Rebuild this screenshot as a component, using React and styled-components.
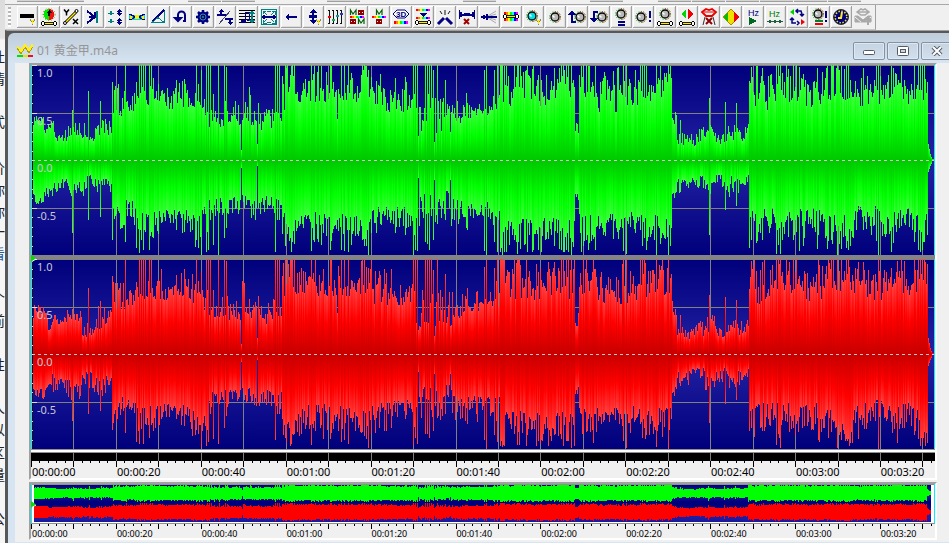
import React from 'react';
import styled, { createGlobalStyle } from 'styled-components';

const GlobalStyle = createGlobalStyle`
  * {
    box-sizing: border-box;
  }
  body {
    margin: 0;
    overflow: hidden;
    background: #f0f0f0;
    font-family: 'Noto Sans', 'Noto Sans CJK SC', sans-serif;
  }
  svg {
    display: block;
  }
`;

const Screen = styled.div`
  display: flex;
  min-height: 100vh;
  overflow: hidden;
`;

const PageStrip = styled.aside`
  flex: none;
  display: flex;
  flex-direction: column;
  width: 5px;
  padding-top: 46px;
  overflow: hidden;
  background: linear-gradient(#dcdcdc 0, #e2e2e2 38px, #f6f6f6 40px);
`;

const StripLine = styled.div`
  height: ${({ $h }) => $h}px;
  margin-left: -9px;
  width: 16px;
  font-size: 14px;
  line-height: 22px;
  color: ${({ $link }) => ($link ? '#2a5d9c' : '#222')};
`;

const Main = styled.main`
  flex: 1;
  display: flex;
  flex-direction: column;
  min-width: 0;
  overflow: hidden;
`;

const UpperBar = styled.div`
  display: flex;
  height: 5px;
  padding-left: 12px;
  border-bottom: 1px solid #a8a8a8;
  background: #f0f0f0;
`;

const UpperSlot = styled.div`
  flex: none;
  width: ${({ $w }) => $w}px;
  height: 2px;
  margin-right: 1px;
  background: ${({ $on }) => ($on ? '#d4d4d4' : 'transparent')};
  border-bottom: 1px solid ${({ $on }) => ($on ? '#a0a0a0' : 'transparent')};
`;

const Toolbar = styled.div`
  display: flex;
  align-self: flex-start;
  align-items: center;
  height: 25px;
  padding-left: 3px;
  background: #f0f0f0;
  border-right: 1px solid #a0a0a0;
  border-bottom: 1px solid #c8c8c8;
`;

const Grip = styled.div`
  width: 3px;
  height: 20px;
  margin-right: 6px;
  background: repeating-linear-gradient(#b8b8b8 0 2px, #fff 2px 4px);
`;

const ToolButton = styled.button`
  flex: none;
  width: 21px;
  height: 22px;
  margin-right: 1px;
  padding: 0;
  border: 0;
  background: #f0f0f0;
  box-shadow: ${({ disabled }) => (disabled
    ? 'none'
    : 'inset -1px -1px #a0a0a0, inset 1px 1px #fff, inset -2px -2px #dcdcdc')};
`;

const Desktop = styled.section`
  flex: 1;
  padding: 2px 0 0 1px;
  border-left: 2px solid #585858;
  border-top: 1px solid #a0a0a0;
  background: #585858;
`;

const Window = styled.article`
  display: flex;
  flex-direction: column;
  min-height: 100%;
  margin-right: -12px;
  padding: 0 7px 7px;
  border-radius: 6px 0 0 0;
  background: linear-gradient(#bfcddb 0, #d7e4f2 30px);
`;

const TitleBar = styled.header`
  display: flex;
  align-items: center;
  height: 30px;
  padding: 5px 1px 0 2px;
`;

const Title = styled.h1`
  flex: 1;
  margin: 0 0 0 4px;
  font-size: 12px;
  font-weight: 400;
  line-height: 16px;
  color: #969696;
`;

const WindowButton = styled.button`
  display: flex;
  align-items: center;
  justify-content: center;
  width: 32px;
  height: 18px;
  margin-left: 2px;
  padding: 0;
  border: 1px solid #8592a3;
  border-radius: 2px;
  background: linear-gradient(#c6d4e2, #d2dfec);
  box-shadow: inset 0 0 0 1px #dde8f3;
`;

const Client = styled.div`
  padding: 0 17px 0 14px;
  background: #f0f0f0;
`;

const Panel = styled.section`
  position: relative;
  margin-bottom: 2px;
  border: 2px solid;
  border-color: #a0a0a0 #fff #fff #a0a0a0;
`;

const Channel = styled.div`
  position: relative;
`;

const Divider = styled.div`
  height: 4px;
  background: #848484;
`;

const AxisLabel = styled.span`
  position: absolute;
  left: 6px;
  top: calc(${({ $at }) => $at}% + 1px);
  font-size: 11px;
  line-height: 14px;
  color: #c8c8d0;
`;

const WhiteRule = styled.div`
  height: 4px;
  border-top: 1px solid #909090;
  border-bottom: 1px solid #909090;
  background: #fff;
`;

const Ruler = styled.div`
  padding-bottom: ${({ $small }) => ($small ? 0 : 1)}px;
  background: #f0f0f0;
`;

const RulerLabels = styled.div`
  display: flex;
  overflow: hidden;
`;

const RulerLabel = styled.span`
  flex: 0 0 9.39%;
  padding-left: 1px;
  white-space: nowrap;
  font-size: ${({ $small }) => ($small ? 9 : 11)}px;
  line-height: ${({ $small }) => ($small ? 9 : 10)}px;
  color: #000;
`;

const Overview = styled.div`
  padding: 1px 3px 1px 2px;
  border-left: 1px solid #00f0ff;
  border-right: 1px solid #00f0ff;
  border-bottom: 1px solid #909090;
  background: linear-gradient(#909090 1px, #fff 1px);
`;

const Marker = styled.svg`
  position: absolute;
  left: 0;
  top: ${({ $top }) => $top};
`;

// ---- sample data ----

const WIDTH = 904;
const HALF = 95;
const STEP = 42.45;
const TIMES = [
  '00:00:00', '00:00:20', '00:00:40', '00:01:00', '00:01:20', '00:01:40',
  '00:02:00', '00:02:20', '00:02:40', '00:03:00', '00:03:20',
];

// [end, top low, top high, bottom low, bottom high]
const leftIntro = [
  [2, 30, 38, 25, 36], [12, 36, 48, 34, 46], [22, 26, 40, 28, 38], [35, 19, 31, 18, 32],
  [55, 22, 38, 22, 36], [63, 19, 24, 14, 28], [81, 24, 42, 18, 34],
];
const rightIntro = [
  [2, 30, 38, 25, 36], [15, 40, 50, 32, 46], [22, 22, 36, 20, 38], [35, 28, 40, 24, 40],
  [50, 32, 44, 26, 46], [62, 17, 32, 15, 34], [81, 24, 48, 20, 42],
];
const body = [
  [94, 44, 76, 42, 72], [105, 48, 64, 40, 60], [127, 55, 74, 52, 78], [143, 50, 72, 48, 64],
  [158, 52, 78, 50, 70], [169, 50, 66, 52, 78], [177, 44, 62, 46, 74], [190, 32, 56, 36, 62],
  [209, 34, 60, 36, 58], [219, 38, 78, 34, 52], [229, 34, 60, 40, 60], [241, 30, 52, 36, 54],
  [250, 34, 56, 36, 58], [253, 46, 80, 52, 72], [262, 66, 94, 62, 90], [269, 54, 72, 58, 72],
  [276, 60, 84, 54, 76], [300, 58, 84, 50, 76], [316, 58, 80, 52, 76], [340, 58, 86, 54, 78],
  [350, 50, 76, 44, 70], [380, 48, 72, 46, 68], [384, 60, 76, 56, 78], [421, 26, 66, 30, 66],
  [430, 36, 60, 38, 66], [462, 42, 56, 42, 60], [470, 48, 66, 42, 62], [498, 54, 92, 56, 88],
  [543, 54, 86, 58, 88], [547, 26, 42, 32, 42], [566, 60, 92, 54, 82], [596, 48, 80, 54, 70],
  [612, 54, 82, 52, 70], [640, 56, 90, 54, 82], [645, 36, 54, 32, 46], [657, 15, 28, 18, 34],
  [664, 14, 30, 14, 26], [673, 18, 34, 14, 30], [684, 22, 40, 22, 36], [694, 16, 26, 14, 28],
  [708, 18, 36, 16, 38], [717, 18, 36, 14, 28], [719, 60, 80, 55, 88], [745, 50, 90, 48, 74],
  [760, 58, 86, 48, 76], [790, 52, 84, 48, 82], [813, 60, 92, 54, 82], [822, 58, 84, 66, 90],
  [850, 54, 86, 46, 76], [870, 60, 88, 50, 82], [885, 56, 80, 48, 72], [896, 56, 84, 54, 86],
];

// [column, top, bottom]
const leftSpikes = [
  [41, 50, 73], [57, 69, 60], [69, 59, 57], [81, 78, 80], [84, 74, 56], [94, 95, 82],
  [105, 78, 88], [108, 95, 93], [110, 95, 80], [112, 95, 90], [114, 95, 72], [118, 95, 90],
  [120, 95, 72], [127, 76, 74], [145, 80, 70], [154, 76, 60], [165, 95, 80], [170, 90, 95],
  [175, 95, 92], [177, 95, 90], [179, 95, 60], [182, 66, 85], [187, 95, 95], [193, 95, 78],
  [195, 93, 68], [210, 10, 8], [226, 16, 6], [244, 95, 92], [246, 95, 60], [248, 95, 60],
  [254, 95, 86], [256, 95, 74], [261, 95, 82], [263, 95, 84], [280, 95, 91], [299, 95, 90],
  [306, 41, 60], [310, 95, 90], [313, 95, 91], [317, 95, 92], [331, 95, 80], [333, 95, 86],
  [337, 90, 95], [349, 86, 64], [382, 95, 95], [384, 95, 90], [386, 95, 91], [387, 24, 18],
  [394, 95, 82], [396, 95, 84], [398, 95, 90], [400, 95, 56], [402, 90, 80], [403, 18, 20],
  [406, 95, 64], [414, 80, 60], [419, 28, 20], [453, 90, 91], [455, 94, 95], [463, 90, 82],
  [466, 95, 92], [469, 95, 92], [470, 95, 88], [471, 95, 95], [483, 95, 80], [486, 95, 94],
  [487, 95, 82], [507, 85, 90], [510, 80, 92], [523, 92, 86], [530, 95, 90], [532, 95, 92],
  [535, 95, 90], [537, 95, 92], [540, 95, 95], [552, 95, 86], [555, 95, 80], [592, 95, 91],
  [595, 95, 94], [609, 95, 70], [611, 95, 86], [613, 95, 78], [625, 95, 95], [637, 95, 95],
  [649, 40, 32], [678, 62, 75], [694, 58, 50], [705, 57, 46], [720, 93, 80], [731, 92, 80],
  [745, 95, 94], [747, 95, 85], [749, 95, 94], [755, 95, 60], [762, 95, 80], [765, 95, 72],
  [800, 95, 80], [802, 95, 72], [806, 95, 95], [808, 90, 84], [815, 95, 88], [817, 95, 90],
  [832, 92, 70], [847, 95, 95], [870, 95, 66], [883, 95, 82], [887, 95, 90], [889, 95, 92],
  [891, 95, 90], [893, 95, 82],
];

const rightSpikes = leftSpikes.map(([x, up, down]) => [
  x, up > 90 || up < 30 ? up : up - (x % 9), down > 60 ? down - (x % 7) : down,
]);

const buildWave = (segments, spikes, start) => {
  let seed = start;
  const next = () => {
    seed = (seed * 16807) % 2147483647;
    return seed / 2147483647;
  };
  const special = new Map(spikes.map(([x, up, down]) => [x, [up, down]]));
  const wave = [];
  let index = 0;
  for (let x = 1; x < WIDTH - 1; x += 1) {
    while (index < segments.length - 1 && x > segments[index][0]) index += 1;
    const [end, a, b, c, d] = segments[index];
    let up = a + (b - a) * next() ** 1.2;
    let down = c + (d - c) * next() ** 1.2;
    // loud passages peak now and then
    if (next() > 0.88 && a > 40) {
      up = Math.min(94, b + 14 * next());
      down = Math.min(92, d + 10 * next());
    }
    if (special.has(x)) [up, down] = special.get(x);
    if (x > end) {
      const fade = Math.max(0, (WIDTH - 3 - x) / 6);
      up = Math.min(28, 28 * fade ** 1.5) + 1;
      down = Math.min(16, 16 * fade) + 1;
    }
    wave.push([x, Math.round(up), Math.round(down)]);
  }
  return wave;
};

const leftWave = buildWave([...leftIntro, ...body], leftSpikes, 4711);
const rightWave = buildWave([...rightIntro, ...body], rightSpikes, 90210);

// ---- waveform parts ----

const gridColumns = Array.from({ length: 21 }, (_, i) => Math.round((i + 1) * STEP));

function Wave({ id, data, colors, label }) {
  return (
    <Channel>
      <svg
        width="100%"
        height="190"
        viewBox={`0 0 ${WIDTH} 190`}
        preserveAspectRatio="none"
        shapeRendering="crispEdges"
        role="img"
        aria-label={label}
      >
        <defs>
          <linearGradient id={`${id}-bg`} x2="0" y2="1">
            <stop offset="0" stopColor="#00007c" />
            <stop offset="0.5" stopColor="#2222a4" />
            <stop offset="1" stopColor="#00007c" />
          </linearGradient>
          <linearGradient id={`${id}-up`} x2="0" y2="1">
            <stop offset="0" stopColor={colors[2]} />
            <stop offset="0.5" stopColor={colors[1]} />
            <stop offset="1" stopColor={colors[0]} />
          </linearGradient>
          <linearGradient id={`${id}-down`} x2="0" y2="1">
            <stop offset="0" stopColor={colors[0]} />
            <stop offset="0.5" stopColor={colors[1]} />
            <stop offset="1" stopColor={colors[2]} />
          </linearGradient>
        </defs>
        <rect width={WIDTH} height="190" fill={`url(#${id}-bg)`} />
        <g fill="#808080">
          {gridColumns.map((x) => <rect key={x} x={x} width="1" height="190" />)}
          {[0, 48, 143].map((y) => <rect key={y} y={y} width={WIDTH} height="1" />)}
        </g>
        {data.map(([x, up, down]) => (
          <React.Fragment key={x}>
            <rect x={x} y={HALF - up} width="1" height={up} fill={`url(#${id}-up)`} />
            <rect x={x} y={HALF} width="1" height={down} fill={`url(#${id}-down)`} />
          </React.Fragment>
        ))}
        <path d="M1 95.5H904" stroke="#d0c8c8" strokeDasharray="3 3" />
        <rect width="1" height="190" fill="#00f0ff" />
        <rect x="1" width="1" height="190" fill="#001030" />
        <path d="M1.5 0V190" stroke="#d8e0e8" strokeDasharray="1 8.5" />
        <path d="M1 48.5h5M1 143.5h5M1 0.5h5" stroke="#e0e0e0" />
        <rect x={WIDTH - 1} width="1" height="190" fill="#00f0ff" />
      </svg>
      <AxisLabel $at={0}>1.0</AxisLabel>
      <AxisLabel $at={25}>0.5</AxisLabel>
      <AxisLabel $at={50}>0.0</AxisLabel>
      <AxisLabel $at={75}>-0.5</AxisLabel>
    </Channel>
  );
}

function TimeRuler({ small }) {
  const ticks = Array.from({ length: 107 }, (_, i) => i);
  return (
    <Ruler $small={small}>
      <svg
        width="100%"
        height={small ? 5 : 6}
        viewBox={`0 0 ${WIDTH} 6`}
        preserveAspectRatio="none"
        shapeRendering="crispEdges"
        aria-hidden="true"
      >
        {ticks.map((i) => (
          <rect key={i} x={Math.round((i * STEP) / 5)} width="1" height={i % 5 ? 2 : 6} />
        ))}
      </svg>
      <RulerLabels>
        {TIMES.map((time) => <RulerLabel key={time} $small={small}>{time}</RulerLabel>)}
      </RulerLabels>
    </Ruler>
  );
}

const overviewPath = (data, mid) => data
  .map(([x, up, down]) => {
    const top = Math.round(Math.sqrt(up) * 0.88);
    const bottom = Math.round(Math.sqrt(down) * 0.95);
    return `M${x} ${mid - top}h1v${top + bottom}h-1z`;
  })
  .join('');

function OverviewWave() {
  return (
    <Overview>
      <svg
        width="100%"
        height="37"
        viewBox="2 0 899 37"
        preserveAspectRatio="none"
        shapeRendering="crispEdges"
        role="img"
        aria-label="Overview"
      >
        <defs>
          <linearGradient id="overview-bg" x2="0" y2="1">
            <stop offset="0" stopColor="#00007c" />
            <stop offset="0.24" stopColor="#2222a4" />
            <stop offset="0.45" stopColor="#00007c" />
            <stop offset="0.55" stopColor="#00007c" />
            <stop offset="0.78" stopColor="#2222a4" />
            <stop offset="1" stopColor="#1818a0" />
          </linearGradient>
        </defs>
        <rect width={WIDTH} height="37" fill="url(#overview-bg)" />
        <path d={overviewPath(leftWave, 8)} fill="#00ff00" />
        <path d={overviewPath(rightWave, 27)} fill="#ff0000" />
      </svg>
    </Overview>
  );
}

function PlayMarker({ top }) {
  return (
    <Marker $top={top} width="6" height="7" aria-hidden="true">
      <path d="M0 0l5 3.500l-5 3.500z" fill="#00e000" />
      <path d="M1 6.500l4-2.500" stroke="#fff" />
    </Marker>
  );
}

// ---- toolbar icons ----

const navy = '#000080';
const teal = '#008080';
const RAINBOW = ['#ff0000', '#ff8000', '#ffff00', '#00ff00', '#00ffff', '#0000ff', '#ff00ff'];

const Rainbow = ({ y, h = 3 }) => (
  <g>
    {RAINBOW.map((c, i) => <rect key={c} x={3 + i * 2} y={y} width="2" height={h} fill={c} />)}
  </g>
);

const Link = ({ y = 16 }) => (
  <g>
    <rect x="5" y={y - 1} width="10" height="3" fill="#202000" />
    <rect x="5" y={y} width="10" height="1" fill="#ffe800" />
    {[2, 14].map((x) => (
      <g key={x}>
        <path d={`M${x + 1} ${y - 1}h2v-1h-2zM${x} ${y - 1}h4v3h-4zM${x + 1} ${y + 2}h2v1h-2z`} fill="#000" />
        <rect x={x + 1} y={y - 1} width="2" height="3" fill="#fff" />
      </g>
    ))}
  </g>
);

const Knob = ({ x = 10, y = 10, fill = '#b8b8b8' }) => (
  <g shapeRendering="geometricPrecision">
    <circle cx={x} cy={y} r="5.500" fill="none" stroke="#00b000" strokeDasharray="1 1.5" />
    <path d={`M${x} ${y - 5.5}a5.500 5.500 0 0 1 0 11`} fill="none" stroke="#f02020" strokeDasharray="1 1.5" />
    <circle cx={x} cy={y} r="4" fill={fill} stroke="#000" strokeWidth="1.300" />
    <path d={`M${x - 2.5} ${y - 1.5}l2 2`} stroke="#fff" strokeWidth="1.500" />
  </g>
);

const Funnel = () => (
  <g>
    <path d="M13 12h1v1h3v-1h1v2h-1v1h-1v3h-1v-3h-1v-1h-1z" fill="#8c8660" />
    <path d="M14 13h3v1h-1v3h-1v-3h-1z" fill="#ffee00" />
  </g>
);

const Bang = () => <path d="M16 4h2v7h-2zM16 13h2v2h-2z" fill={navy} />;

const CrossBox = ({ x, y }) => (
  <g fill="none" stroke="#900000">
    <rect x={x + 0.5} y={y + 0.5} width="5" height="4" />
    <path d={`M${x} ${y}l6 5m0-5l-6 5`} />
  </g>
);

const Zig = ({ x, y }) => (
  <path
    d={`M${x + 0.5} ${y + 5}v-5l2.500 4l3-4v5`}
    fill="none"
    stroke="#006000"
    strokeWidth="1.200"
    shapeRendering="geometricPrecision"
  />
);

const tools = [
  ['Device', <g><rect x="3" y="7" width="14" height="4" /><Funnel /></g>],
  ['Volume shape', (
    <g>
      <path d="M10 2a5.500 5.500 0 0 0 0 11z" fill="#00e800" />
      <path d="M10 2a5.500 5.500 0 0 1 0 11z" fill="#f01010" />
      <circle cx="10" cy="7.500" r="6" fill="none" stroke="#807000" strokeDasharray="1 2" shapeRendering="geometricPrecision" />
      <path d="M10 3l3 3h-2v3h-2V6H7z" fill="#000" />
      <Link />
    </g>
  )],
  ['Expression', (
    <g shapeRendering="geometricPrecision">
      <path d="M5 15L15 5" stroke="#000" strokeWidth="3" />
      <path d="M5 15L15 5" stroke="#ffe800" strokeWidth="1.500" />
      <circle cx="15.500" cy="4" r="1.500" fill="#fff" stroke="#000" />
      <circle cx="4" cy="16" r="1.500" fill="#fff" stroke="#000" />
      <path d="M3 2.500l2.500 3l2.500-3M5.500 5.500v3M12 12l5 5M17 12l-5 5" fill="none" stroke="#000" strokeWidth="1.500" />
    </g>
  )],
  ['Maximize', (
    <g fill="none" strokeWidth="2">
      <path d="M4 4l8 6M12 5v5H6M12 10l-8 6" stroke={navy} />
      <path d="M14 4v12" stroke={teal} />
    </g>
  )],
  ['Compress', (
    <g>
      <path d="M5 4h2v2h2v1h-2v1h-2v-1h-2v-1h2zM5 12h2v2h2v1h-2v1h-2v-1h-2v-1h2z" fill={teal} />
      <path d="M14 2l3 3h-2v1h2l-3 3l-3-3h2v-1h-2zM14 11l3 3h-2v1h2l-3 3l-3-3h2v-1h-2z" fill={navy} />
    </g>
  )],
  ['Doppler', (
    <g>
      <rect x="2" y="8" width="16" height="5" fill="#00d8e8" />
      <path d="M2 7h3v1h2v1h6v-1h2v-1h3v1h-2v1h-2v1H6v-1H4v-1H2zM2 13h3v-1h2v-1h6v1h2v1h3v-1h-2v-1h-2v-1H6v1H4v1H2z" fill={navy} />
      <rect x="8" y="8" width="4" height="4" fill="#ffee00" />
      <rect x="3" y="9" width="2" height="3" fill="#ffee00" />
      <rect x="15" y="9" width="2" height="3" fill="#ffee00" />
    </g>
  )],
  ['Fade in', (
    <g fill="none">
      <path d="M3 15L15 3" stroke={navy} strokeWidth="2" />
      <path d="M15.500 4v11.500H3l6-5l6 5" stroke={teal} />
    </g>
  )],
  ['Reverse', (
    <path d="M7 13V8a3.500 3.500 0 0 1 7 0v6h-2M4 11h6l-3 3z" fill="none" stroke={navy} strokeWidth="2" shapeRendering="geometricPrecision" />
  )],
  ['Mechanize', (
    <g fill={navy} shapeRendering="geometricPrecision">
      <circle cx="10" cy="10" r="5.500" />
      <path d="M10 3v14M3 10h14M5 5l10 10M15 5L5 15" stroke={navy} strokeWidth="2.500" />
      <circle cx="10" cy="10" r="3" fill="none" stroke="#309090" />
      <circle cx="10" cy="10" r="1" fill="#309090" />
    </g>
  )],
  ['Offset', (
    <g fill={navy}>
      <path d="M6 2l3 3h-2v2h4v2H2V7h3V5H3zM13 11h5v2h-2v2h2l-3 3l-3-3h2v-2h-4v-2z" />
      <path d="M4 17L15 4" stroke="#446" strokeWidth="1" />
    </g>
  )],
  ['Pitch', (
    <g>
      <path d="M2 3.500h16M2 6.500h16M2 9.500h16M2 12.500h16M2 15.500h16" stroke="#000" />
      <path d="M8 5v9M8 5h4v7" stroke={navy} strokeWidth="1" fill="none" />
      <path d="M4 13h5v3H4zM10 12h3v2h-3z" fill={navy} />
      <path d="M15 3l3 4h-2v6h2l-3 4l-3-4h2V7h-2z" fill={teal} />
    </g>
  )],
  ['Time warp', (
    <g fill="none" stroke={teal}>
      <rect x="2.500" y="2.500" width="15" height="15" />
      <path d="M4 7V4.500h3M13 4.500h3v3M4.500 13v3h3M13 16h3v-3M8 5l2-1l2 1M8 15l2 1l2-1M5 5l3 3M15 5l-3 3M5 15l3-3M15 15l-3-3" />
      <path d="M3 10h14M5 8v4M15 8v4" stroke={navy} strokeWidth="2" />
    </g>
  )],
  ['Shift left', <path d="M4 10l4-4v3h8v2H8v3z" fill={navy} />],
  ['Resample', (
    <g>
      <path d="M10 2l4 4h-3v2h3v3h-3v2h3l-4 4l-4-4h3v-2H6V8h3V6H6z" fill={navy} />
      <Funnel />
    </g>
  )],
  ['Equalizer', (
    <g>
      <path d="M4.500 3v14M8.500 3v14M12.500 3v14M16.500 3v14" stroke="#111" />
      <path d="M3 3h2M3 16h2M7 3h2M7 16h2M11 3h2M11 16h2M15 3h2M15 16h2" stroke="#111" />
      <rect x="3" y="9" width="3" height="2" fill="#f00000" />
      <rect x="7" y="12" width="3" height="2" fill="#00b060" />
      <rect x="11" y="8" width="3" height="2" fill="#00a0a0" />
      <rect x="15" y="6" width="3" height="2" fill="#3030c0" />
    </g>
  )],
  ['Spectrum filter', <g><Zig x={3} y={3} /><CrossBox x={11} y={3} /><Rainbow y={9} h={2} /><CrossBox x={3} y={12} /><Zig x={11} y={12} /></g>],
  ['Band filter', <g><Zig x={7} y={3} /><Rainbow y={9} h={2} /><CrossBox x={7} y={12} /></g>],
  ['Stereo 3D', (
    <g>
      <path d="M2 7l4-4h8l4 4l-4 4H6z" fill="#fff" stroke={navy} shapeRendering="geometricPrecision" />
      <text x="5" y="10" fontSize="8" fontWeight="700" fontFamily="Liberation Sans, sans-serif" fill={navy}>3D</text>
      <Rainbow y={14} />
    </g>
  )],
  ['Parametric', <g><Rainbow y={2} h={2} /><path d="M6 6h8l-4 4z" fill={navy} /><Rainbow y={10} h={2} /><Link y={15} /></g>],
  ['Flanger', (
    <g stroke={navy} shapeRendering="geometricPrecision">
      <path d="M3 17l6-6M17 17l-6-6" strokeWidth="3" />
      <path d="M10 3v5M5 4l2 3M15 4l-2 3" stroke="#111" />
    </g>
  )],
  ['Silence', (
    <g>
      <path d="M2 3h1v2h2v2h2v-1h6v1h2V5h2V3h1v9h-1v-2h-2v-1H5v1H3v2H2z" fill={navy} />
      <path d="M7 12l5 5M12 12l-5 5" stroke="#a00000" strokeWidth="2" fill="none" shapeRendering="geometricPrecision" />
    </g>
  )],
  ['Smooth', (
    <g fill="none">
      <path d="M9 9l8-5M9 11l8 5M11 9l6-2M11 11l6 2" stroke="#a8a8b0" shapeRendering="geometricPrecision" />
      <path d="M2 10h16M5 8v4M8 7v6" stroke={navy} strokeWidth="2" />
    </g>
  )],
  ['Spectrum', <g><Rainbow y={5} h={9} /><Link y={9} /></g>],
  ['Noise knob', <g><Knob x={9} y={9} fill="#00e0e8" /><Funnel /></g>],
  ['Volume', <Knob />],
  ['Volume up', <g><path d="M4 16V8H1l4-5l4 5H6v6h3v2z" fill={navy} /><Knob x={13} /></g>],
  ['Volume down', <g><path d="M9 4H4v7H1l4 5l4-5H6V6h3z" fill={navy} /><Knob x={13} /></g>],
  ['Match volume', <g><Knob y={7} /><path d="M7 14h7v2H7zM7 17h7v2H7z" fill={navy} /></g>],
  ['Auto gain', <g><Knob x={8} /><Bang /></g>],
  ['Shape volume', <g><Knob y={7} /><Link /></g>],
  ['Pan shape', (
    <g>
      <path d="M9 2v10L4 7z" fill="#00d800" />
      <path d="M11 2v10l5-5z" fill="#f00000" />
      <Link />
    </g>
  )],
  ['Remove vocals', (
    <g fill="none" stroke="#e80000" shapeRendering="geometricPrecision">
      <path d="M3 5l4-3l3 1l3-1l4 3l-4 4H7z" strokeWidth="1.800" />
      <path d="M5 5h10" />
      <path d="M6 10l-2 8M14 10l2 8" stroke="#333" />
      <path d="M7 11l6 6M13 11l-6 6" stroke="#900000" strokeWidth="2" />
    </g>
  )],
  ['Balance', (
    <g>
      <path d="M10 2l8 8l-8 8l-8-8z" fill="#f0e000" stroke="#a09000" />
      <path d="M7 5v10l-5-5z" fill="#00c000" />
      <path d="M13 5v10l5-5z" fill="#f00000" />
    </g>
  )],
  ['Playback rate', (
    <g>
      <text x="5" y="9" fontSize="9" fontFamily="Liberation Sans, sans-serif" fill={navy}>Hz</text>
      <path d="M6 10v8l8-4z" fill="#006820" />
    </g>
  )],
  ['Sample rate', (
    <g>
      <text x="4" y="10" fontSize="9" fontFamily="Liberation Sans, sans-serif" fill="#008000">Hz</text>
      <path d="M2 14h16v1H2zM4 13h2v3H4zM9 13h2v3H9zM14 13h2v3h-2z" fill="#206040" />
    </g>
  )],
  ['Swap channels', (
    <g fill="none" stroke={navy} strokeWidth="1.500" shapeRendering="geometricPrecision">
      <path d="M9 4h5l1 3v2M13 7l2 2l2-2M11 2L9 4l2 2M9 16H5v-5M3 13l2-2l2 2M10 14l2 2l-2 2" />
      <path d="M7 2v6L3 5z" fill="#00d000" stroke="none" />
      <path d="M14 12v6l4-3z" fill="#f00000" stroke="none" />
    </g>
  )],
  ['Limit', (
    <g>
      <Knob x={9} y={7} />
      <Bang />
      <path d="M6 13h8v2H6z" fill="#008030" />
      <path d="M6 16h8v2H6z" fill="#f00000" />
    </g>
  )],
  ['Timer', (
    <g shapeRendering="geometricPrecision">
      <circle cx="10" cy="10" r="7.500" fill={navy} stroke="#303020" />
      <circle cx="10" cy="10" r="5.800" fill="none" stroke="#f0e020" strokeWidth="1.500" strokeDasharray="1.500 1.500" />
      <path d="M11 5l-1 6H7" fill="none" stroke="#ffee20" strokeWidth="2" />
    </g>
  )],
  ['Send', (
    <g stroke="#a8a8a8" fill="none" shapeRendering="geometricPrecision">
      <path d="M4 5l4-3l2 1l2-1l4 3l-4 3H8zM5 5h10" strokeWidth="1.500" />
      <path d="M2 9h3l5 4l5-4h3v6H2z" fill="#a8a8a8" />
      <path d="M2 10l6 5M18 10l-5 4" stroke="#f0f0f0" />
      <path d="M15 11v7M12 14l3-3l3 3" strokeWidth="2" />
    </g>
  )],
];

const stripLines = [
  ['吐', 22], ['情', 43], ['式', 46], ['价', 22], ['你', 22], ['你', 20], ['一', 22],
  ['看', 44, true], ['个', 23], ['前', 44], ['性', 43], ['人', 22], ['以', 23], ['区', 22], ['量', 44], ['公', 22],
];

const upperSlots = [
  [33, true], [33, true], [102, false], [33, true], [33, true], [70, false], [33, true],
  [101, false], [33, true], [92, false], [33, true], [33, false], [33, true], [33, true],
  [33, true], [33, true], [33, true], [33, true],
];

export default function App() {
  return (
    <Screen>
      <GlobalStyle />
      <PageStrip>
        {stripLines.map(([text, h, link], i) => (
          <StripLine key={i} $h={h} $link={link}>{text}</StripLine>
        ))}
      </PageStrip>
      <Main>
        <UpperBar>
          {upperSlots.map(([w, on], i) => <UpperSlot key={i} $w={w} $on={on} />)}
        </UpperBar>
        <Toolbar role="toolbar" aria-label="Effects">
          <Grip />
          {tools.map(([name, icon], i) => (
            <ToolButton key={name} type="button" aria-label={name} disabled={i === tools.length - 1}>
              <svg width="20" height="20" viewBox="0 0 20 20" shapeRendering="crispEdges">{icon}</svg>
            </ToolButton>
          ))}
        </Toolbar>
        <Desktop>
          <Window>
            <TitleBar>
              <svg width="16" height="14" shapeRendering="crispEdges" aria-hidden="true">
                <path d="M0 3l4 5l4-6l4 5l4-6" fill="none" stroke="#b0a000" strokeWidth="3" />
                <path d="M0 2l4 5l4-6l4 5l4-6" fill="none" stroke="#ffee20" strokeWidth="2" />
                <rect y="11" width="6" height="2" fill="#00e000" />
                <rect x="6" y="11" width="5" height="2" fill="#f0e000" />
                <rect x="11" y="11" width="5" height="2" fill="#f01010" />
              </svg>
              <Title>01 黄金甲.m4a</Title>
              <WindowButton type="button" aria-label="Minimize">
                <svg width="12" height="10"><rect x="0.500" y="4.500" width="11" height="4" rx="1" fill="#fff" stroke="#555b66" /></svg>
              </WindowButton>
              <WindowButton type="button" aria-label="Maximize window">
                <svg width="12" height="10">
                  <rect x="0.500" y="0.500" width="11" height="9" rx="1" fill="#fff" stroke="#555b66" />
                  <rect x="3.500" y="3.500" width="5" height="3" fill="#ccd8e4" stroke="#555b66" />
                </svg>
              </WindowButton>
              <WindowButton type="button" aria-label="Close">
                <svg width="12" height="10">
                  <path d="M2 1l8 8M10 1l-8 8" stroke="#555b66" strokeWidth="4" />
                  <path d="M2 1l8 8M10 1l-8 8" stroke="#fff" strokeWidth="2" />
                </svg>
              </WindowButton>
            </TitleBar>
            <Client>
              <Panel>
                <Wave id="left" data={leftWave} colors={['#00c800', '#00ff00', '#3cff3c']} label="Left channel" />
                <Divider />
                <Wave id="right" data={rightWave} colors={['#c80000', '#ff0000', '#ff4040']} label="Right channel" />
                <WhiteRule />
                <svg
                  width="100%"
                  height="8"
                  viewBox={`0 0 ${WIDTH} 8`}
                  preserveAspectRatio="none"
                  shapeRendering="crispEdges"
                  aria-hidden="true"
                >
                  <rect width={WIDTH} height="8" />
                  {gridColumns.map((x) => <rect key={x} x={x} width="1" height="8" fill="#808080" />)}
                </svg>
                <TimeRuler />
                <PlayMarker top="190px" />
              </Panel>
              <Panel>
                <OverviewWave />
                <TimeRuler small />
                <PlayMarker top="17px" />
              </Panel>
            </Client>
          </Window>
        </Desktop>
      </Main>
    </Screen>
  );
}
